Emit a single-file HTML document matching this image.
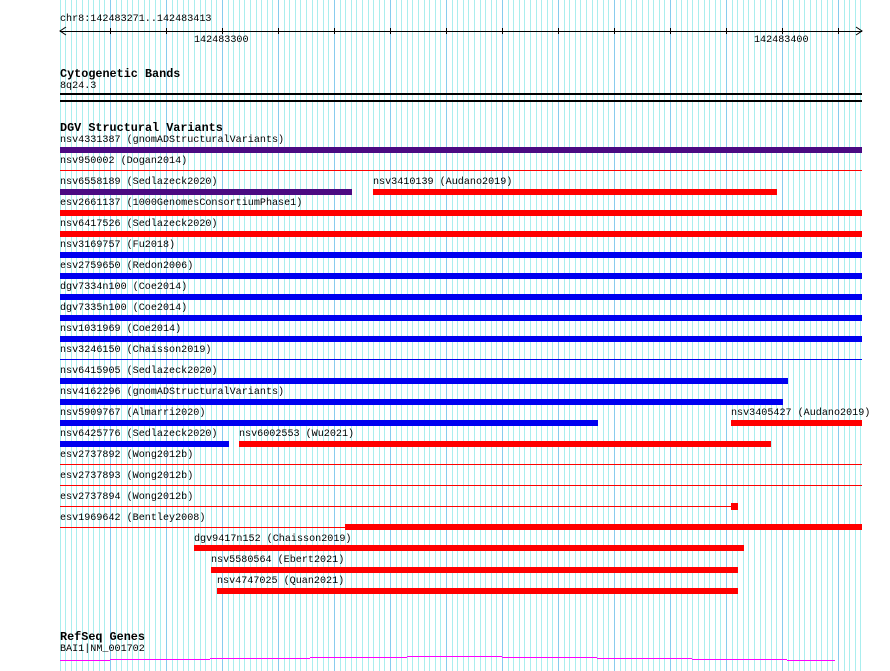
<!DOCTYPE html>
<html><head><meta charset="utf-8"><style>
body{margin:0;width:890px;height:671px;background:#fff;position:relative;overflow:hidden}
#grid{position:absolute;left:0;top:0}
.t{position:absolute;font:10.1px/10px "Liberation Mono",monospace;color:#000;white-space:pre}
.h{position:absolute;font:bold 11.8px/12px "Liberation Mono",monospace;color:#000;white-space:pre}
.b{position:absolute;height:6px}
.l{position:absolute;height:1px}
.p{background:#4b0a82}.r{background:#f00}.u{background:#0000f0}.m{background:#f0f}.k{background:#000}
.tick{position:absolute;top:28px;width:1px;height:6px;background:#000}
</style></head><body>
<svg id="grid" width="890" height="671" shape-rendering="crispEdges">
<defs>
<pattern id="lt" x="110" y="0" width="28" height="10" patternUnits="userSpaceOnUse">
<rect x="0" width="1" height="10" fill="#aaeeee"/><rect x="6" width="1" height="10" fill="#aaeeee"/><rect x="11" width="1" height="10" fill="#aaeeee"/><rect x="17" width="1" height="10" fill="#aaeeee"/><rect x="22" width="1" height="10" fill="#aaeeee"/>
</pattern>
<pattern id="dk" x="110" y="0" width="56" height="10" patternUnits="userSpaceOnUse">
<rect x="0" width="1" height="10" fill="#88ccee"/>
</pattern>
</defs>
<rect x="60" y="0" width="803" height="671" fill="url(#lt)"/>
<rect x="60" y="0" width="803" height="671" fill="url(#dk)"/>
<rect x="60" y="0" width="1" height="671" fill="#aaeeee"/>
</svg>
<div class="t" style="left:60px;top:15px">chr8:142483271..142483413</div>
<div class="l k" style="left:60px;top:31px;width:802px"></div>
<svg style="position:absolute;left:58px;top:25px" width="810" height="13"><polyline points="8,2 2,6 8,10" fill="none" stroke="#000"/><polyline points="798,2 804,6 798,10" fill="none" stroke="#000"/></svg>
<div class="tick" style="left:110px"></div><div class="tick" style="left:166px"></div><div class="tick" style="left:222px"></div><div class="tick" style="left:278px"></div><div class="tick" style="left:334px"></div><div class="tick" style="left:390px"></div><div class="tick" style="left:446px"></div><div class="tick" style="left:502px"></div><div class="tick" style="left:558px"></div><div class="tick" style="left:614px"></div><div class="tick" style="left:670px"></div><div class="tick" style="left:726px"></div><div class="tick" style="left:782px"></div><div class="tick" style="left:838px"></div>
<div class="t" style="left:194px;top:36px">142483300</div>
<div class="t" style="left:754px;top:36px">142483400</div>

<div class="h" style="left:60px;top:68px">Cytogenetic Bands</div>
<div class="t" style="left:60px;top:82px">8q24.3</div>
<div class="l k" style="left:60px;top:93px;width:802px;height:1.5px"></div>
<div class="l k" style="left:60px;top:100px;width:802px;height:1.5px"></div>

<div class="h" style="left:60px;top:122px">DGV Structural Variants</div>
<div class="t" style="left:60px;top:136px">nsv4331387 (gnomADStructuralVariants)</div>
<div class="b p" style="left:60px;top:147px;width:802px"></div>
<div class="t" style="left:60px;top:157px">nsv950002 (Dogan2014)</div>
<div class="l r" style="left:60px;top:170px;width:802px"></div>
<div class="t" style="left:60px;top:178px">nsv6558189 (Sedlazeck2020)</div>
<div class="b p" style="left:60px;top:189px;width:292px"></div>
<div class="t" style="left:373px;top:178px">nsv3410139 (Audano2019)</div>
<div class="b r" style="left:373px;top:189px;width:404px"></div>
<div class="t" style="left:60px;top:199px">esv2661137 (1000GenomesConsortiumPhase1)</div>
<div class="b r" style="left:60px;top:210px;width:802px"></div>
<div class="t" style="left:60px;top:220px">nsv6417526 (Sedlazeck2020)</div>
<div class="b r" style="left:60px;top:231px;width:802px"></div>
<div class="t" style="left:60px;top:241px">nsv3169757 (Fu2018)</div>
<div class="b u" style="left:60px;top:252px;width:802px"></div>
<div class="t" style="left:60px;top:262px">esv2759650 (Redon2006)</div>
<div class="b u" style="left:60px;top:273px;width:802px"></div>
<div class="t" style="left:60px;top:283px">dgv7334n100 (Coe2014)</div>
<div class="b u" style="left:60px;top:294px;width:802px"></div>
<div class="t" style="left:60px;top:304px">dgv7335n100 (Coe2014)</div>
<div class="b u" style="left:60px;top:315px;width:802px"></div>
<div class="t" style="left:60px;top:325px">nsv1031969 (Coe2014)</div>
<div class="b u" style="left:60px;top:336px;width:802px"></div>
<div class="t" style="left:60px;top:346px">nsv3246150 (Chaisson2019)</div>
<div class="l u" style="left:60px;top:359px;width:802px"></div>
<div class="t" style="left:60px;top:367px">nsv6415905 (Sedlazeck2020)</div>
<div class="b u" style="left:60px;top:378px;width:728px"></div>
<div class="t" style="left:60px;top:388px">nsv4162296 (gnomADStructuralVariants)</div>
<div class="b u" style="left:60px;top:399px;width:723px"></div>
<div class="t" style="left:60px;top:409px">nsv5909767 (Almarri2020)</div>
<div class="b u" style="left:60px;top:420px;width:538px"></div>
<div class="t" style="left:731px;top:409px">nsv3405427 (Audano2019)</div>
<div class="b r" style="left:731px;top:420px;width:131px"></div>
<div class="t" style="left:60px;top:430px">nsv6425776 (Sedlazeck2020)</div>
<div class="b u" style="left:60px;top:441px;width:169px"></div>
<div class="t" style="left:239px;top:430px">nsv6002553 (Wu2021)</div>
<div class="b r" style="left:239px;top:441px;width:532px"></div>
<div class="t" style="left:60px;top:451px">esv2737892 (Wong2012b)</div>
<div class="l r" style="left:60px;top:464px;width:802px"></div>
<div class="t" style="left:60px;top:472px">esv2737893 (Wong2012b)</div>
<div class="l r" style="left:60px;top:485px;width:802px"></div>
<div class="t" style="left:60px;top:493px">esv2737894 (Wong2012b)</div>
<div class="l r" style="left:60px;top:506px;width:671px"></div>
<div class="b r" style="left:731px;top:503px;width:7px;height:7px"></div>
<div class="t" style="left:60px;top:514px">esv1969642 (Bentley2008)</div>
<div class="l r" style="left:60px;top:527px;width:286px"></div>
<div class="b r" style="left:345px;top:524px;width:517px"></div>
<div class="t" style="left:194px;top:535px">dgv9417n152 (Chaisson2019)</div>
<div class="b r" style="left:194px;top:545px;width:550px"></div>
<div class="t" style="left:211px;top:556px">nsv5580564 (Ebert2021)</div>
<div class="b r" style="left:211px;top:567px;width:527px"></div>
<div class="t" style="left:217px;top:577px">nsv4747025 (Quan2021)</div>
<div class="b r" style="left:217px;top:588px;width:521px"></div>

<div class="h" style="left:60px;top:631px">RefSeq Genes</div>
<div class="t" style="left:60px;top:645px">BAI1|NM_001702</div>
<div class="l m" style="left:60px;top:660px;width:50px"></div>
<div class="l m" style="left:110px;top:659px;width:100px"></div>
<div class="l m" style="left:210px;top:658px;width:100px"></div>
<div class="l m" style="left:310px;top:657px;width:97px"></div>
<div class="l m" style="left:407px;top:656px;width:95px"></div>
<div class="l m" style="left:502px;top:657px;width:95px"></div>
<div class="l m" style="left:597px;top:658px;width:95px"></div>
<div class="l m" style="left:692px;top:659px;width:95px"></div>
<div class="l m" style="left:787px;top:660px;width:48px"></div>
</body></html>
